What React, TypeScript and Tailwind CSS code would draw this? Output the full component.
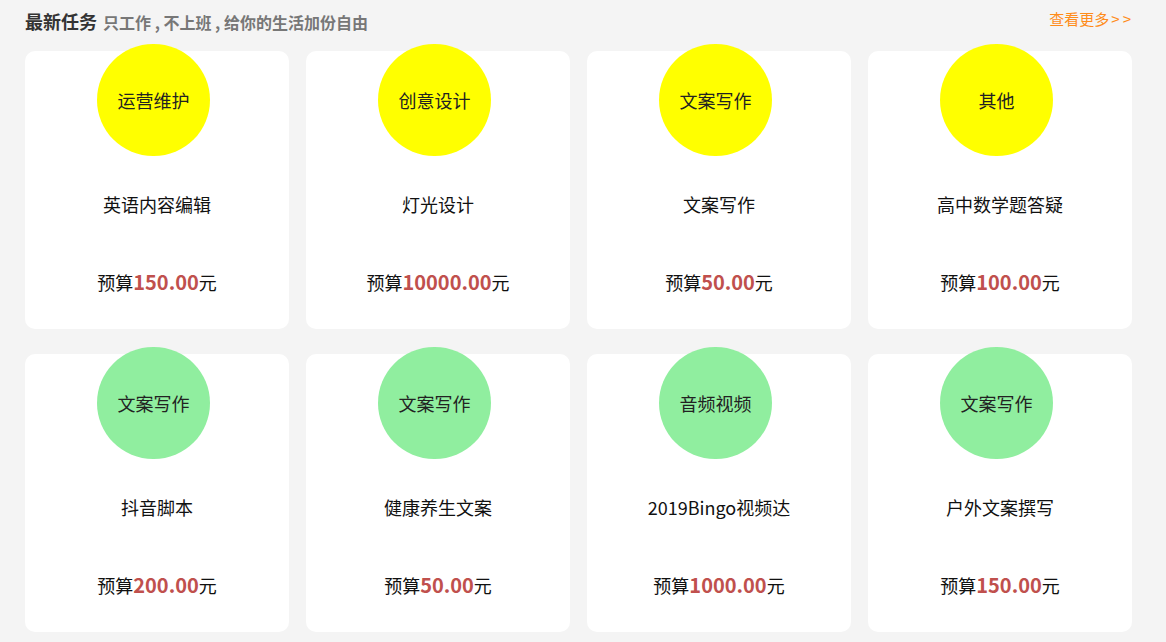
import React from 'react';

type Task = { tag: string; title: string; budget: string; color: 'yellow' | 'green' };

const tasks: Task[] = [
  { tag: '运营维护', title: '英语内容编辑', budget: '150.00', color: 'yellow' },
  { tag: '创意设计', title: '灯光设计', budget: '10000.00', color: 'yellow' },
  { tag: '文案写作', title: '文案写作', budget: '50.00', color: 'yellow' },
  { tag: '其他', title: '高中数学题答疑', budget: '100.00', color: 'yellow' },
  { tag: '文案写作', title: '抖音脚本', budget: '200.00', color: 'green' },
  { tag: '文案写作', title: '健康养生文案', budget: '50.00', color: 'green' },
  { tag: '音频视频', title: '2019Bingo视频达', budget: '1000.00', color: 'green' },
  { tag: '文案写作', title: '户外文案撰写', budget: '150.00', color: 'green' },
];

function TaskCard({ task }: { task: Task }) {
  return (
    <div className="h-[278px] bg-white rounded-[10px] flex flex-col">
      {/* category bubble pokes above the card */}
      <div
        className={`-mt-[7px] ml-[72px] w-[113px] h-[112px] rounded-full flex items-center justify-center text-[18px] text-[#222] ${
          task.color === 'yellow' ? 'bg-[#ffff00]' : 'bg-[#90ee9f]'
        }`}
      >
        {task.tag}
      </div>
      <div className="mt-[36px] leading-[24px] text-[18px] text-[#111] text-center">{task.title}</div>
      <div className="mt-[54px] leading-[24px] text-[18px] text-[#111] text-center">
        预算<span className="font-bold text-[20px] text-[#c0504d]">{task.budget}</span>元
      </div>
    </div>
  );
}

export default function App() {
  return (
    <div
      className="w-[1166px] h-[642px] bg-[#f4f4f4] pl-[25px] pr-[34px] overflow-hidden"
      style={{ fontFamily: '"Microsoft YaHei", "Noto Sans CJK SC", "Noto Sans", sans-serif' }}
    >
      {/* header */}
      <div className="h-[51px] flex justify-between items-start">
        <div className="mt-[8px] flex items-baseline">
          <span className="text-[18px] font-bold text-[#333]">最新任务</span>
          <span className="ml-[6px] text-[16px] font-bold text-[#777]">只工作 , 不上班 , 给你的生活加份自由</span>
        </div>
        <a className="mt-[8px] -mr-[2px] text-[15px] text-[#ff8c1a]">
          查看更多<span className="ml-[2px] tracking-[3px]">&gt;&gt;</span>
        </a>
      </div>

      <div className="grid grid-cols-4 gap-x-[17px] gap-y-[25px]">
        {tasks.map((t, i) => (
          <TaskCard key={i} task={t} />
        ))}
      </div>
    </div>
  );
}
